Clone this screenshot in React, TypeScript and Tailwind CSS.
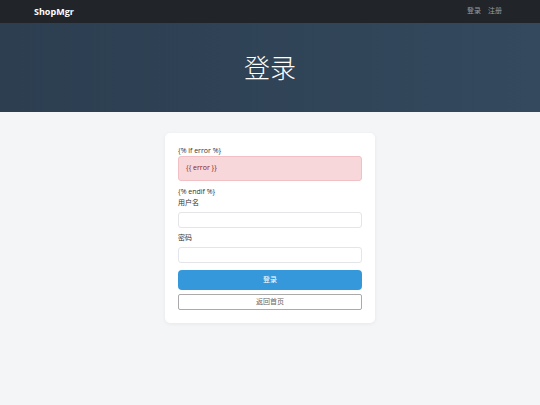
export default function App() {
  return (
    <div className="min-h-[405px] bg-[#f4f5f7] font-['Open_Sans','Noto_Sans_CJK_SC',sans-serif]">
      <nav className="h-[23px] bg-[#212529] flex items-center justify-between pl-[34px] pr-[38px]">
        <span className="text-[9px] font-bold text-white">ShopMgr</span>
        <div className="flex gap-[7px] text-[7px] text-[#9a9da0]">
          <span>登录</span>
          <span>注册</span>
        </div>
      </nav>
      <header className="h-[89px] bg-gradient-to-r from-[#2c3e50] to-[#34495e] flex items-center justify-center">
        <h1 className="text-[26px] font-light text-white leading-none">登录</h1>
      </header>
      <main className="flex justify-center pt-[21px] pb-8">
        <div className="w-[210px] bg-white rounded-[5px] shadow-[0_1px_4px_rgba(0,0,0,0.06)] p-[13px] text-[7px] text-[#333]">
          <p className="leading-[10px]">{'{% if error %}'}</p>
          <div className="h-[25px] bg-[#f8d7da] border border-[#f1c0c5] rounded-[3px] flex items-center pl-[7px] text-[#842029]">
            {'{{ error }}'}
          </div>
          <p className="mt-[6px] leading-[10px]">{'{% endif %}'}</p>
          <label className="block leading-[10px] mt-[1px]">用户名</label>
          <div className="mt-[4px] h-[16px] border border-[#e3e5e8] rounded-[3px] bg-white" />
          <label className="block leading-[10px] mt-[5px]">密码</label>
          <div className="mt-[4px] h-[16px] border border-[#e3e5e8] rounded-[3px] bg-white" />
          <button className="mt-[7px] w-full h-[20px] bg-[#3498db] rounded-[4px] text-white text-[7px] flex items-center justify-center">
            登录
          </button>
          <button className="mt-[4px] w-full h-[16px] bg-white border border-[#aaaaaa] rounded-[2px] text-[#666] text-[7px] flex items-center justify-center">
            返回首页
          </button>
        </div>
      </main>
    </div>
  );
}
